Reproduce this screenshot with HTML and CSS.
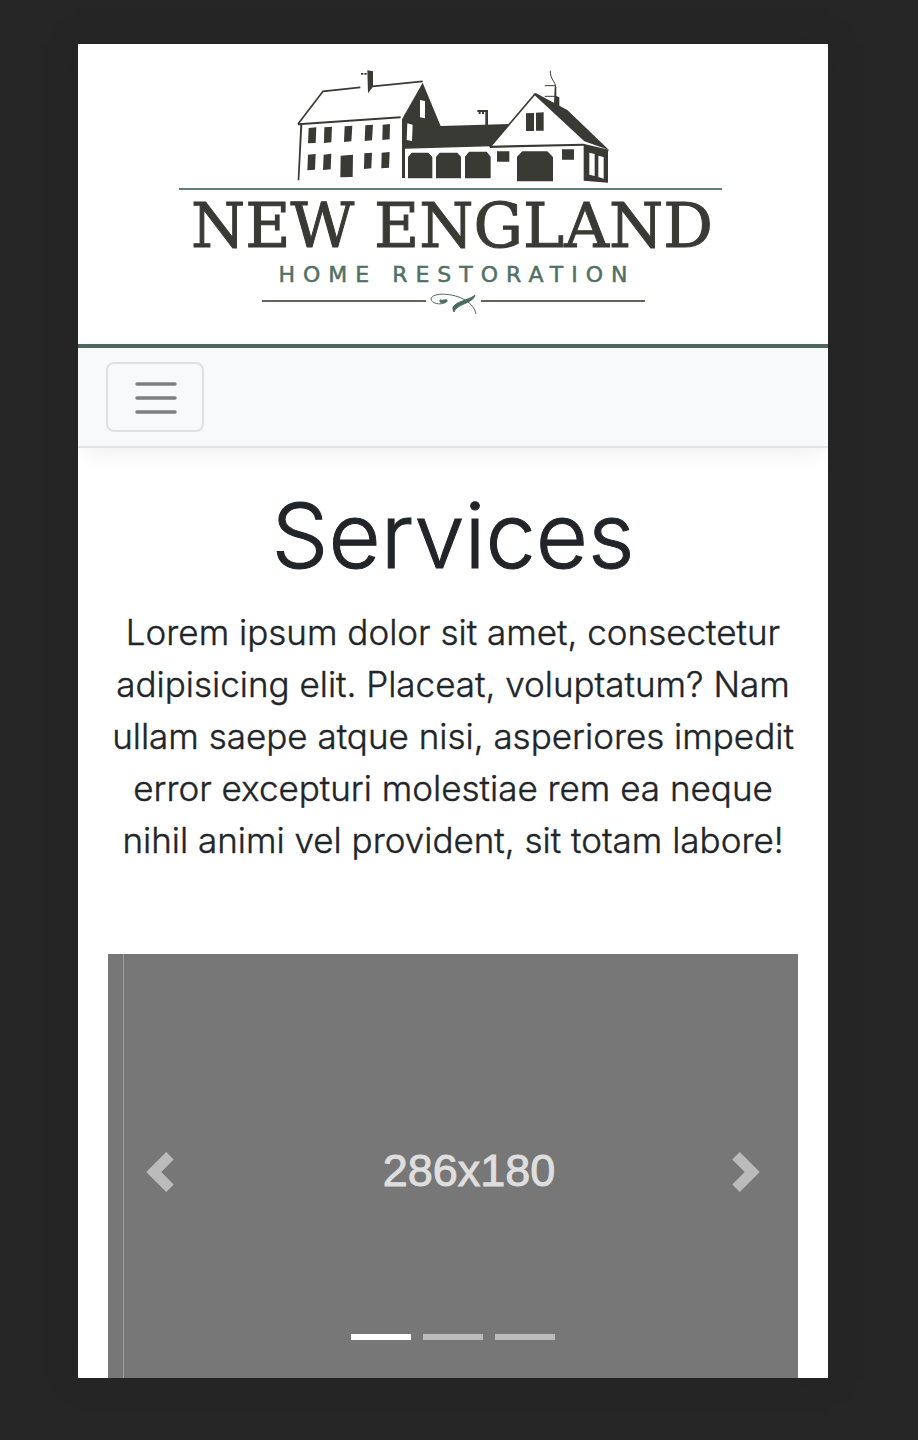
FILE: index.html
```html
<!DOCTYPE html>
<html lang="en">
<head>
<meta charset="utf-8">
<meta name="viewport" content="width=device-width, initial-scale=1">
<title>New England Home Restoration</title>
<link rel="stylesheet" href="styles.css">
</head>
<body>
<div class="frame">
  <header class="brand">
    <svg class="logo" viewBox="173 60 560 268" role="img" aria-label="New England Home Restoration">
      <g transform="translate(290 60) scale(.33333)" fill="#393a34">
        <path d="M24 192 99 94 211 82M248 79 398 64" fill="none" stroke="#393a34" stroke-width="5"/>
        <path d="M24 190 332 169V175L24 196ZM31 192H37L28 361H23Z"/>
        <path d="M232 31 249 34V80L234 100ZM213 39H220V44H213ZM223 39H230V44H223Z"/>
        <path d="M56 204 79 202 77 249 54 250ZM103 202 126 200 124 247 102 249ZM164 199 187 197 184 244 162 246ZM226 196 249 194 246 241 224 243ZM278 194 300 192 299 238 277 240ZM54 284 77 282 75 329 52 331ZM101 284 124 281 122 328 99 330ZM152 287 189 284 188 351 151 352ZM223 280 246 278 244 325 222 327ZM275 278 299 276 297 323 274 325Z"/>
        <path fill-rule="evenodd" d="M398 68 336 178V354H345V266L604 259 659 192 452 198ZM390 120V172L405 175V123ZM352 190 350 240 366 243 368 194Z"/>
        <path d="M354 355V291L365 278H415L427 291V355ZM438 355V291L449 278H502L513 291V355ZM525 355V290L537 275H590L602 290V355Z"/>
      </g>
      <g transform="translate(450 60) scale(.33333)" fill="#393a34">
        <path d="M106 195V156H82V150H114V195ZM86 155H92V162H86ZM96 155H102V162H96Z"/>
        <path d="M119 262 255 102" fill="none" stroke="#393a34" stroke-width="5"/>
        <path d="M250 102 257 99 352 150 477 270 403 244Z"/>
        <path d="M119 257 400 251 476 269 475 274 401 257 120 264Z"/>
        <path d="M312 133 314 80H319V108L328 112V138Z"/>
        <path d="M301 32C300 59 317 63 317 84M284 77H318M284 109H318" fill="none" stroke="#393a34" stroke-width="3"/>
        <path d="M228 160 252 159V213H228ZM258 158 281 157V212H258ZM141 274H178V305H141ZM336 268H372V299H336ZM201 364V290L217 274H292L309 291V364Z"/>
        <path fill-rule="evenodd" d="M401 254 474 271V368L401 362ZM418 278V344L434 348V282ZM445 287V351L461 356V291Z"/>
      </g>
      <path d="M179 189H722" stroke="#5f7f73" stroke-width="2"/>
      <text class="logo-name" x="452" y="247" text-anchor="middle">NEW ENGLAND</text>
      <text class="logo-sub" x="457" y="282" text-anchor="middle">HOME RESTORATION</text>
      <path d="M262 301H426M481 301H645" stroke="#66635c" stroke-width="2"/>
      <g fill="none" stroke="#4a6b60">
        <path d="M446 302C440 306 431 303 431 299C432 292 454 293 465 300C472 304 475 309 476 314"/>
        <path d="M440 302C444 304 448 302 447 300C445 299 444 301 440 300Z" fill="#4a6b60"/>
        <path d="M475 295C474 303 456 304 454 312C448 302 469 301 475 295Z" fill="#4a6b60"/>
      </g>
    </svg>
  </header>
  <nav class="navbar">
    <button class="toggler" type="button" aria-label="Toggle navigation">
      <svg viewBox="0 0 44 36" width="44" height="36" aria-hidden="true"><path d="M4 5H42M4 19H42M4 33H42" stroke="#7d7f7f" stroke-width="3.5" stroke-linecap="round"/></svg>
    </button>
  </nav>
  <main class="content">
    <h1 class="title">Services</h1>
    <p class="lead">Lorem ipsum dolor sit amet, consectetur adipisicing elit. Placeat, voluptatum? Nam ullam saepe atque nisi, asperiores impedit error excepturi molestiae rem ea neque nihil animi vel provident, sit totam labore!</p>
    <section class="carousel" aria-label="Services carousel">
      <div class="edge"></div>
      <div class="slide">286x180</div>
      <button class="control prev" type="button" aria-label="Previous"><svg viewBox="0 0 8 8" width="40" height="40"><path fill="#fff" d="M5.25 0l-4 4 4 4 1.5-1.5L4.25 4l2.5-2.5L5.25 0z"/></svg></button>
      <button class="control next" type="button" aria-label="Next"><svg viewBox="0 0 8 8" width="40" height="40"><path fill="#fff" d="M2.75 0l-1.5 1.5L3.75 4l-2.5 2.5L2.75 8l4-4-4-4z"/></svg></button>
      <div class="indicators">
        <button class="dot active" type="button" aria-label="Slide 1"></button>
        <button class="dot" type="button" aria-label="Slide 2"></button>
        <button class="dot" type="button" aria-label="Slide 3"></button>
      </div>
    </section>
  </main>
</div>
</body>
</html>
```
FILE: styles.css
```css
* { box-sizing: border-box; }

body {
  margin: 0;
  height: 100vh;
  padding: 44px 90px 62px 78px;
  background: #262626;
  color: #212529;
  font-family: Inter, "Liberation Sans", sans-serif;
}

.frame {
  height: 100%;
  overflow: hidden;
  background: #fff;
  box-shadow: 0 0 24px #242424;
}

.brand {
  display: flex;
  justify-content: center;
  padding: 16px;
  border-bottom: 4px solid #4f695e;
}

.logo { width: 100%; max-width: 560px; }

.logo-name {
  font: 62px "DejaVu Serif", serif;
  fill: #393a34;
  stroke: #393a34;
  stroke-width: 1px;
}

.logo-sub {
  font: 22px "DejaVu Sans", sans-serif;
  letter-spacing: 8px;
  fill: #4f7064;
  stroke: #4f7064;
  stroke-width: .5px;
}

.navbar {
  padding: 14px 28px;
  background: #f8f9fb;
  border-bottom: 2px solid #dee2e6;
  box-shadow: 0 8px 24px -4px rgba(0, 0, 0, .07);
}

.toggler {
  display: flex;
  align-items: center;
  justify-content: center;
  width: 98px;
  height: 70px;
  padding: 0;
  background: none;
  border: 2px solid #dfe0e2;
  border-radius: 8px;
}

.content {
  padding: 48px 30px;
  text-align: center;
}

.title {
  margin: 0;
  font-size: 90px;
  font-weight: 300;
  line-height: 80px;
  -webkit-text-stroke: 1px #212529;
}

.lead {
  margin: 30px 0 88px;
  font-size: 35px;
  font-weight: 300;
  line-height: 52px;
  -webkit-text-stroke: .4px #212529;
}

.carousel {
  position: relative;
  display: flex;
  height: 436px;
  overflow: hidden;
  background: #777;
}

.edge {
  width: 16px;
  border-right: 1px solid #a0a0a0;
}

.slide {
  flex: 1;
  padding-right: 16px;
  padding-left: 32px;
  color: #dedede;
  font: 45px/434px "Liberation Sans", sans-serif;
  -webkit-text-stroke: 1px #dedede;
}

.control {
  position: absolute;
  top: 0;
  bottom: 0;
  display: flex;
  align-items: center;
  justify-content: center;
  width: 15%;
  padding: 0;
  background: none;
  border: 0;
  opacity: .5;
}

.prev { left: 0; }
.next { right: 0; }

.indicators {
  position: absolute;
  right: 0;
  bottom: 50px;
  left: 0;
  display: flex;
  justify-content: center;
  gap: 12px;
}

.dot {
  width: 60px;
  height: 6px;
  padding: 0;
  background: #bbb;
  border: 0;
}

.active { background: #fff; }
```
